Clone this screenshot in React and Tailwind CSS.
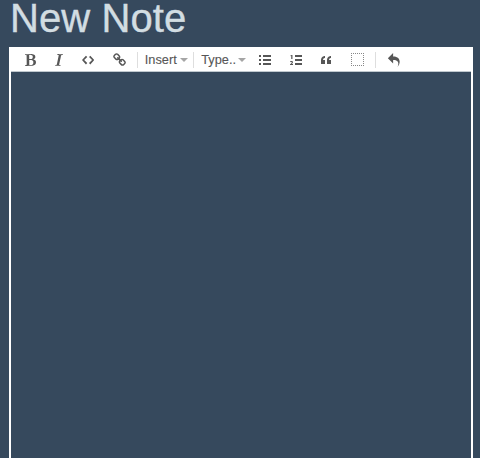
const icons = {
  strong: [805, 1024, "M317 869q42 18 80 18 214 0 214-191 0-65-23-102-15-25-35-42t-38-26-46-14-48-6-54-1q-41 0-57 5 0 30-0 90t-0 90q0 4-0 38t-0 55 2 47 6 38zM309 442q24 4 62 4 46 0 81-7t62-25 42-51 14-81q0-40-16-70t-45-46-61-24-70-8q-28 0-74 7 0 28 2 86t2 86q0 15-0 45t-0 45q0 26 0 39zM0 950l1-53q8-2 48-9t60-15q4-6 7-15t4-19 3-18 1-21 0-19v-37q0-561-12-585-2-4-12-8t-25-6-28-4-27-2-17-1l-2-47q56-1 194-6t213-5q13 0 39 0t38 0q40 0 78 7t73 24 61 40 42 59 16 78q0 29-9 54t-22 41-36 32-41 25-48 22q88 20 146 76t58 141q0 57-20 102t-53 74-78 48-93 27-100 8q-25 0-75-1t-75-1q-60 0-175 6t-132 6z"],
  em: [585, 1024, "M0 949l9-48q3-1 46-12t63-21q16-20 23-57 0-4 35-165t65-310 29-169v-14q-13-7-31-10t-39-4-33-3l10-58q18 1 68 3t85 4 68 1q27 0 56-1t69-4 56-3q-2 22-10 50-17 5-58 16t-62 19q-4 10-8 24t-5 22-4 26-3 24q-15 84-50 239t-44 203q-1 5-7 33t-11 51-9 47-3 32l0 10q9 2 105 17-1 25-9 56-6 0-18 0t-18 0q-16 0-49-5t-49-5q-78-1-117-1-29 0-81 5t-69 6z"],
  code: [896, 1024, "M608 192l-96 96 224 224-224 224 96 96 288-320-288-320zM288 192l-288 320 288 320 96-96-224-224 224-224-96-96z"],
  link: [951, 1024, "M832 694q0-22-16-38l-118-118q-16-16-38-16-24 0-41 18 1 1 10 10t12 12 8 10 7 14 2 15q0 22-16 38t-38 16q-8 0-15-2t-14-7-10-8-12-12-10-10q-18 17-18 41 0 22 16 38l117 118q15 15 38 15 22 0 38-14l84-83q16-16 16-38zM430 292q0-22-16-38l-117-118q-16-16-38-16-22 0-38 15l-84 83q-16 16-16 37 0 22 16 38l118 118q15 15 38 15 24 0 41-17-1-1-10-10t-12-12-8-10-7-14-2-15q0-22 16-38t38-16q8 0 15 2t14 7 10 8 12 12 10 10q18-17 18-41zM941 694q0 68-48 116l-84 83q-47 47-116 47-69 0-116-48l-117-118q-47-47-47-116 0-70 50-119l-50-50q-49 50-118 50-68 0-116-48l-118-118q-48-48-48-116t48-116l84-83q47-47 116-47 69 0 116 48l117 118q47 47 47 116 0 70-50 119l50 50q49-50 118-50 68 0 116 48l118 118q48 48 48 116z"],
  bullet: [768, 896, "M0 512h128v-128h-128v128zM0 256h128v-128h-128v128zM0 768h128v-128h-128v128zM256 512h512v-128h-512v128zM256 256h512v-128h-512v128zM256 768h512v-128h-512v128z"],
  ordered: [768, 896, "M320 512h448v-128h-448v128zM320 768h448v-128h-448v128zM320 128v128h448v-128h-448zM79 384h78v-256h-36l-85 23v50l43-2v185zM189 590c0-36-12-78-96-78-33 0-64 6-83 16l1 66c21-10 42-15 67-15s32 11 32 28c0 26-30 58-110 112v50h192v-67l-91 2c49-30 87-66 87-113l1-1z"],
  quote: [640, 896, "M0 448v256h256v-256h-128c0 0 0-128 128-128v-128c0 0-256 0-256 256zM640 320v-128c0 0-256 0-256 256v256h256v-256h-128c0 0 0-128 128-128z"],
  undo: [1024, 1024, "M761 1024c113-206 132-520-313-509v253l-384-384 384-384v248c534-13 594 472 313 775z"],
};

function Icon({ name, className = "" }) {
  const [w, h, d] = icons[name];
  return (
    <button aria-label={name} className={`flex shrink-0 ${className}`}>
      <svg viewBox={`0 0 ${w} ${h}`} className="h-3.5 w-auto" fill="currentColor">
        <path d={d} />
      </svg>
    </button>
  );
}

function Dropdown({ label, className = "" }) {
  return (
    <button className={`flex shrink-0 items-center justify-between text-[12.8px] leading-4 ${className}`}>
      {label}
      <span className="border-x-4 border-t-4 border-x-transparent border-t-[#a5a5a5]" />
    </button>
  );
}

function Separator({ className = "" }) {
  return <span className={`h-4 w-px shrink-0 bg-[#dedede] ${className}`} />;
}

export default function App() {
  return (
    <main className="flex h-screen flex-col overflow-hidden bg-[#36495d] pr-[7px] pl-[9px] font-['Liberation_Sans',Arial,sans-serif]">
      <h1 className="h-[47px] shrink-0 pl-px text-[40px] leading-[36px] tracking-[0.1px] text-[#d2dde2] [-webkit-text-stroke:0.4px_#d2dde2]">New Note</h1>
      <section className="flex flex-1 flex-col border-x-2 border-t border-white">
        <div className="flex h-[24px] shrink-0 items-center border-b border-[#c0c8ce] bg-white pl-[14px] text-[#565656]">
          <Icon name="strong" />
          <Icon name="em" className="ml-[19px]" />
          <Icon name="code" className="ml-[19px]" />
          <Icon name="link" className="ml-[19px]" />
          <Separator className="ml-[11px]" />
          <Dropdown label="Insert" className="ml-[6.5px] w-[43.5px] [-webkit-text-stroke:0.1px_#565656]" />
          <Separator className="ml-[5px]" />
          <Dropdown label="Type.." className="ml-[7px] w-[45px] [-webkit-text-stroke:0.1px_#565656]" />
          <Icon name="bullet" className="ml-[13px]" />
          <Icon name="ordered" className="ml-[19px]" />
          <Icon name="quote" className="ml-[19px]" />
          <span className="ml-[19.5px] size-[13px] shrink-0 border border-dotted border-[#888]" />
          <Separator className="ml-[11.5px]" />
          <Icon name="undo" className="ml-[10.5px]" />
        </div>
        <div className="flex-1" />
      </section>
    </main>
  );
}
